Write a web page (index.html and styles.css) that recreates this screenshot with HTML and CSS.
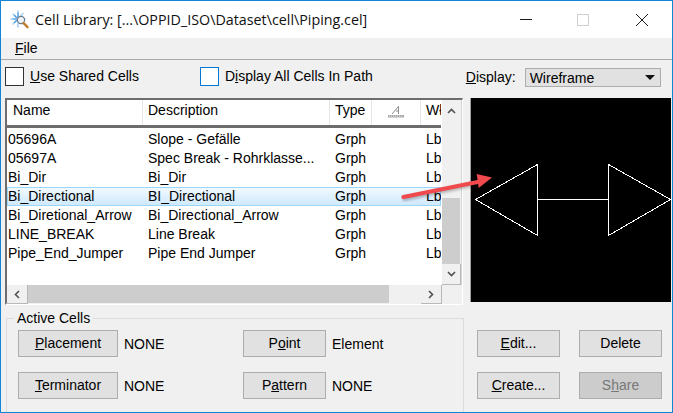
FILE: index.html
```html
<!DOCTYPE html>
<html lang="en">
<head>
<meta charset="utf-8">
<title>Cell Library</title>
<link rel="stylesheet" href="styles.css">
</head>
<body>
<div class="window">
  <header class="titlebar">
    <svg class="app-icon" width="20" height="20" viewBox="0 0 20 20">
      <g stroke="#a9d3f3" stroke-width="1.6" stroke-linecap="round">
        <path d="M8 1v16M1 9h14M3 4l10 10M13 3.500L3 14"/>
      </g>
      <g stroke="#4f9ee0" stroke-width="1.2" stroke-linecap="round">
        <path d="M8 3v4M3 9h3M4.500 5.500l2 2M4.500 12.500l2-2"/>
      </g>
      <circle cx="11" cy="10" r="3.600" fill="#eef6fc" stroke="#6d7b85" stroke-width="1.200"/>
      <path d="M13.500 13l4 4.200" stroke="#c07a2c" stroke-width="2.400" stroke-linecap="round"/>
    </svg>
    <span class="title-text">Cell Library: [...\OPPID_ISO\Dataset\cell\Piping.cel]</span>
    <div class="caption-buttons">
      <svg class="cap" width="12" height="12" viewBox="0 0 12 12"><path d="M0 5.500h12" stroke="#1a1a1a"/></svg>
      <svg class="cap" width="12" height="12" viewBox="0 0 12 12"><rect x=".5" y=".5" width="11" height="11" fill="none" stroke="#cfcfcf"/></svg>
      <svg class="cap" width="12" height="12" viewBox="0 0 12 12"><path d="M0 0l12 12M12 0L0 12" stroke="#1a1a1a"/></svg>
    </div>
  </header>

  <nav class="menubar"><span><u>F</u>ile</span></nav>

  <section class="options">
    <label class="check"><span class="box"></span><span><u>U</u>se Shared Cells</span></label>
    <label class="check check-second"><span class="box box-focus"></span><span>D<u>i</u>splay All Cells In Path</span></label>
    <span class="display-label"><u>D</u>isplay:</span>
    <div class="combo"><span>Wireframe</span><svg width="10" height="5" viewBox="0 0 10 5"><path d="M0 0h10L5 5z" fill="#111"/></svg></div>
  </section>

  <section class="main">
    <div class="list">
      <div class="list-body">
        <div class="table">
          <div class="row head">
            <span class="c1">Name</span><span class="c2">Description</span><span class="c3">Type</span>
            <span class="c4"><svg width="18" height="14" viewBox="0 0 18 14"><path d="M5 9L11.500 1.500V9M9 6h2.500" fill="none" stroke="#8d8d8d"/><path d="M1 10h16v2.500H1z" fill="#a9a9a9"/><path d="M2 11h14" stroke="#e6e6e6" stroke-dasharray="1 1"/></svg></span>
            <span class="c5">Wł</span>
          </div>
          <div class="rows">
            <div class="row"><span class="c1">05696A</span><span class="c2">Slope - Gefälle</span><span class="c3">Grph</span><span class="c4"></span><span class="c5">Lb</span></div>
            <div class="row"><span class="c1">05697A</span><span class="c2">Spec Break - Rohrklasse...</span><span class="c3">Grph</span><span class="c4"></span><span class="c5">Lb</span></div>
            <div class="row"><span class="c1">Bi_Dir</span><span class="c2">Bi_Dir</span><span class="c3">Grph</span><span class="c4"></span><span class="c5">Lb</span></div>
            <div class="row selected"><span class="c1">Bi_Directional</span><span class="c2">BI_Directional</span><span class="c3">Grph</span><span class="c4"></span><span class="c5">Lb</span></div>
            <div class="row"><span class="c1">Bi_Diretional_Arrow</span><span class="c2">Bi_Directional_Arrow</span><span class="c3">Grph</span><span class="c4"></span><span class="c5">Lb</span></div>
            <div class="row"><span class="c1">LINE_BREAK</span><span class="c2">Line Break</span><span class="c3">Grph</span><span class="c4"></span><span class="c5">Lb</span></div>
            <div class="row"><span class="c1">Pipe_End_Jumper</span><span class="c2">Pipe End Jumper</span><span class="c3">Grph</span><span class="c4"></span><span class="c5">Lb</span></div>
          </div>
        </div>
        <div class="vscroll">
          <div class="sb-btn sb-v"><svg width="9" height="6" viewBox="0 0 9 6"><path d="M1 5l3.500-3.500L8 5" fill="none" stroke="#505050" stroke-width="1.600"/></svg></div>
          <div class="v-track"><div class="v-thumb"></div></div>
          <div class="sb-btn sb-v sb-raised"><svg width="9" height="6" viewBox="0 0 9 6"><path d="M1 1l3.500 3.500L8 1" fill="none" stroke="#505050" stroke-width="1.600"/></svg></div>
        </div>
      </div>
      <div class="hscroll">
        <div class="sb-btn sb-h sb-raised"><svg width="6" height="9" viewBox="0 0 6 9"><path d="M5 1L1.500 4.500 5 8" fill="none" stroke="#505050" stroke-width="1.600"/></svg></div>
        <div class="h-thumb"></div>
        <div class="h-rest"></div>
        <div class="sb-btn sb-h sb-raised"><svg width="6" height="9" viewBox="0 0 6 9"><path d="M1 1l3.500 3.500L1 8" fill="none" stroke="#505050" stroke-width="1.600"/></svg></div>
      </div>
    </div>
    <div class="preview">
      <svg width="200" height="203" viewBox="0 0 200 203" shape-rendering="crispEdges">
        <path d="M3.500 101.500L65.500 66.500V137.500Z M136.500 66.500V137.500L198.500 101.500Z" fill="none" stroke="#fff"/>
        <path d="M66 101.500H136" stroke="#fff"/>
      </svg>
    </div>
  </section>

  <section class="bottom">
    <fieldset class="group">
      <legend>Active Cells</legend>
      <div class="group-grid">
        <button class="btn btn-wide"><u>P</u>lacement</button><span class="val">NONE</span>
        <button class="btn">P<u>o</u>int</button><span class="val">Element</span>
        <button class="btn btn-wide"><u>T</u>erminator</button><span class="val">NONE</span>
        <button class="btn">P<u>a</u>ttern</button><span class="val">NONE</span>
      </div>
    </fieldset>
    <div class="actions">
      <button class="btn"><u>E</u>dit...</button>
      <button class="btn">Delete</button>
      <button class="btn"><u>C</u>reate...</button>
      <button class="btn btn-disabled">S<u>h</u>are</button>
    </div>
  </section>

  <svg class="callout" width="100" height="32" viewBox="0 0 100 32">
    <defs><filter id="soft" x="-20%" y="-40%" width="140%" height="200%"><feGaussianBlur stdDeviation="1.500"/></filter></defs>
    <g transform="translate(-398 -170)">
      <path d="M402 199.500L479 183l1 6 12-11-15-4.500 1 6L402 195z" fill="#000" opacity=".28" filter="url(#soft)" transform="translate(1 2)"/>
      <path d="M403.500 197L480 181.500" stroke="#f04a4e" stroke-width="4.200" stroke-linecap="round"/>
      <path d="M492 177.500L476.700 174 478.700 188z" fill="#f04a4e"/>
    </g>
  </svg>
</div>
</body>
</html>
```
FILE: styles.css
```css
* { box-sizing: border-box; }
html, body { margin: 0; padding: 0; }
body { width: 673px; height: 413px; overflow: hidden; background: #f0f0f0; }
.window {
  position: relative;
  width: 673px; height: 413px;
  border: 1px solid #0f85d8;
  background: #f0f0f0;
  font: 14px "Liberation Sans", Arial, sans-serif;
  color: #000;
  display: flex; flex-direction: column;
  overflow: hidden;
}
u { text-underline-offset: 1px; text-decoration-thickness: 1px; }

.titlebar { height: 37px; background: #fff; display: flex; align-items: center; padding-left: 9px; flex: none; }
.app-icon { flex: none; }
.title-text { font: 14.3px "Open Sans", sans-serif; margin-left: 5px; color: #111; }
.caption-buttons { margin-left: auto; display: flex; padding-right: 24px; gap: 46px; }
.cap { display: block; }
.cap:nth-child(2) { margin-left: -1px; margin-right: 1px; }

.menubar { height: 22px; flex: none; border-bottom: 1px solid #a8a8a8; padding: 2px 0 0 14px; }

.options { height: 38px; flex: none; display: flex; align-items: flex-start; padding: 7px 0 0 4px; }
.check { display: flex; align-items: center; gap: 6px; line-height: 16px; padding-bottom: 0; }
.check span:last-child { margin-top: -1px; }
.check-second { margin-left: 61px; }
.box { width: 19px; height: 19px; background: #fff; border: 1px solid #333; display: block; }
.box-focus { border-color: #0078d7; }
.display-label { margin-left: 93px; padding-top: 2px; }
.combo {
  width: 136px; height: 19px; margin-left: 9px; margin-top: 1px;
  background: #e1e1e1; border: 1px solid #adadad;
  display: flex; align-items: center; justify-content: space-between;
  padding: 0 5px 0 4px;
}

.main { display: flex; height: 205px; flex: none; padding-left: 4px; }
.list {
  width: 458px; height: 207px;
  border-top: 2px solid #6d6d6d; border-left: 2px solid #6d6d6d;
  border-bottom: 2px solid #fff; border-right: 1px solid #fff;
  background: #fff;
  display: flex; flex-direction: column;
}
.list-body { display: flex; height: 185px; flex: none; }
.table { width: 435px; flex: none; overflow: hidden; }
.row { display: flex; height: 19px; line-height: 18px; white-space: nowrap; width: 434px; }
.head { height: 28px; line-height: 21px; border-bottom: 3px solid #6d6d6d; }
.head span { border-right: 1px solid #e5e5e5; padding-left: 6px; }
.head .c2 { padding-left: 5px; }
.head .c3 { padding-left: 5px; }
.head .c5 { border-right: 0; padding-left: 5px; overflow: hidden; }
.head .c4 { display: flex; justify-content: center; align-items: center; padding: 0 0 2px; }
.rows { padding-top: 2px; }
.row > span { flex: none; display: block; }
.c1 { width: 136px; }
.c2 { width: 187px; }
.c3 { width: 42px; }
.c4 { width: 49px; }
.c5 { width: 20px; overflow: hidden; }
.rows .c1 { padding-left: 1px; }
.rows .c2 { padding-left: 5px; }
.rows .c3 { padding-left: 5px; }
.rows .c5 { padding-left: 5px; width: 20px; }
.selected {
  background: linear-gradient(#f4faff, #cde8fd);
  box-shadow: inset 0 0 0 1px #99d6fb;
}

.vscroll { width: 20px; flex: none; display: flex; flex-direction: column; background: #f0f0f0; border-right: 1px solid #d6d6d6; }
.sb-btn { display: flex; align-items: center; justify-content: center; flex: none; background: #f0f0f0; }
.sb-v { height: 21px; }
.sb-raised { border-right: 1px solid #b8b8b8; border-bottom: 1px solid #b8b8b8; }
.v-track { flex: 1; display: flex; flex-direction: column; justify-content: flex-end; }
.v-thumb { height: 66px; width: 18px; background: #cdcdcd; }

.hscroll { height: 19px; flex: none; display: flex; background: #f0f0f0; }
.sb-h { width: 21px; }
.h-thumb { width: 361px; background: #cdcdcd; margin-bottom: 1px; }
.h-rest { width: 32px; margin-bottom: 1px; }

.preview { width: 201px; height: 204px; margin-left: 7px; border-left: 1px solid #a0a0a0; background: #000; padding-left: 1px; }
.preview svg { display: block; }

.bottom { flex: none; display: flex; padding: 7px 0 0 5px; height: 110px; }
.group {
  width: 458px; height: 120px; margin: 0; padding: 0;
  border: 1px solid #dcdcdc; min-width: 0;
}
.group legend { margin-left: 7px; padding: 0 3px; line-height: 17px; }
.group-grid {
  display: grid;
  grid-template-columns: 100px 125px 83px auto;
  grid-auto-rows: 27px; row-gap: 15px;
  padding: 3px 0 0 11px;
  align-items: center;
}
.btn {
  font: inherit; color: #000; height: 27px; width: 83px;
  background: #e1e1e1; border: 1px solid #adadad; padding: 0 0 1px;
}
.btn-wide { width: 100px; }
.btn-disabled { background: #cccccc; color: #787878; }
.val { padding-left: 6px; }
.actions {
  margin-left: 13px; padding-top: 20px;
  display: grid; grid-template-columns: 83px 83px; column-gap: 19px;
  grid-auto-rows: 27px; row-gap: 15px;
}

.callout { position: absolute; left: 397px; top: 169px; pointer-events: none; }
```
